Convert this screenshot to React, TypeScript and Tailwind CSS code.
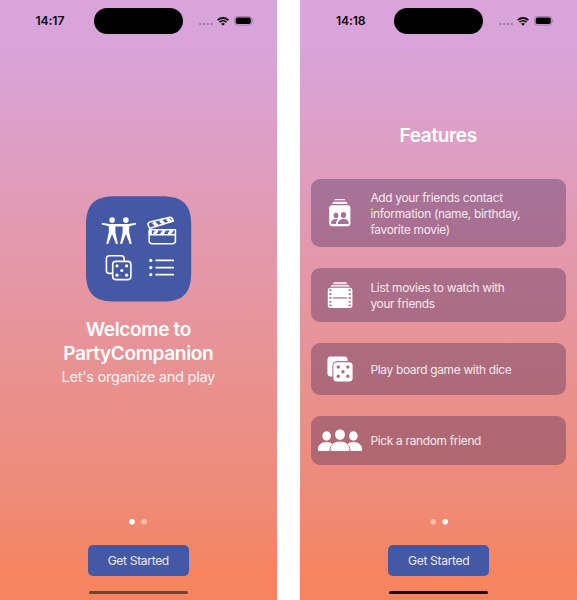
import React from "react";

function Wifi() {
  return (
    <svg width="12" height="9" viewBox="0 0 12 9" fill="none" stroke="#0b070c">
      <path d="M0.6 3.1C3.7 0.3 8.3 0.3 11.4 3.1" strokeWidth="1.8" />
      <path d="M2.5 5.2C4.5 3.4 7.5 3.4 9.5 5.2" strokeWidth="1.7" />
      <path d="M4.1 6.7C5.2 5.8 6.8 5.8 7.9 6.7L6 8.7Z" fill="#0b070c" stroke="none" />
    </svg>
  );
}

function Battery() {
  return (
    <svg width="20" height="10" viewBox="0 0 20 10">
      <rect x="0.6" y="0.5" width="17.3" height="8.6" rx="2.8" fill="none" stroke="#9b759c" strokeWidth="0.8" />
      <rect x="1.7" y="1.6" width="15.1" height="6.4" rx="1.8" fill="#000" />
      <path d="M18.6 3.3C19.7 3.8 19.7 5.8 18.6 6.3Z" fill="#8d6b8e" />
    </svg>
  );
}

function StatusBar({ time }: { time: string }) {
  return (
    <div className="flex h-[42px] shrink-0 items-center">
      <div className="w-[94px] pl-[35.5px] text-[12.2px] leading-4 font-semibold tracking-[-0.1px] text-[#0b070c]">{time}</div>
      <div className="h-[26px] w-[88.5px] rounded-full bg-black" />
      <svg className="mt-[5px] ml-[16px]" width="14" height="4" viewBox="0 0 14 4" fill="#a37ba5">
        {[1.3, 5.1, 8.9, 12.7].map((cx) => (
          <circle key={cx} cx={cx} cy="2" r="1.2" />
        ))}
      </svg>
      <div className="ml-[4.5px]"><Wifi /></div>
      <div className="ml-[5px]"><Battery /></div>
    </div>
  );
}

function Footer({ active, barClass }: { active: number; barClass: string }) {
  return (
    <div className="mt-auto flex shrink-0 flex-col items-center">
      <svg width="20" height="6" viewBox="0 0 20 6">
        {[0, 1].map((i) => (
          <circle key={i} cx={i === 0 ? 4.1 : 16.2} cy="2.8" r="2.8" fill={i === active ? "#ffffff" : "#f8bcae"} />
        ))}
      </svg>
      <button className="mt-[20.4px] h-[31px] w-[101.5px] rounded-[5px] bg-[#4558a6] text-[12.1px] leading-4 tracking-[-0.34px] text-[#eceaf4]">Get Started</button>
      <div className={`mt-[14.7px] mb-[5.6px] h-[3.6px] w-[99px] rounded-full ${barClass}`} />
    </div>
  );
}

function Screen({ time, active, barClass, children }: { time: string; active: number; barClass: string; children: React.ReactNode }) {
  return (
    <section className="flex h-[600px] w-[276.6px] flex-col bg-[linear-gradient(180deg,#d9a4da_0px,#d9a4da_44px,#e6959e_310px,#ef8a75_510px,#f5845f_574px)]">
      <StatusBar time={time} />
      {children}
      <Footer active={active} barClass={barClass} />
    </section>
  );
}

function AppLogo() {
  return (
    <svg width="106" height="106" viewBox="0 0 106 106" className="ml-[0.6px] shrink-0">
      <path d="M30 0.3H76C97.5 0.3 105.6 8.5 105.6 30V76C105.6 97.5 97.5 105.6 76 105.6H30C8.5 105.6 0.3 97.5 0.3 76V30C0.3 8.5 8.5 0.3 30 0.3Z" transform="translate(-0.4 0)" fill="#4558a6" />
      <g fill="#fff">
        <circle cx="26.1" cy="24.1" r="2.8" />
        <circle cx="39.9" cy="24.1" r="2.8" />
        <path d="M15.8 26.7L23.4 27.9H42.6L50.1 26.7V28.5L43.2 30.2V36.6L45.6 47.2Q45.2 48.6 43.7 47.7L39.9 38L36.1 47.7Q34.6 48.6 34.2 47.2L36.6 36.6V30.4H29.4V36.6L31.8 47.2Q31.4 48.6 29.9 47.7L26.1 38L22.3 47.7Q20.8 48.6 20.4 47.2L22.8 36.6V30.2L15.8 28.5Z" />
      </g>
      <g stroke="#fff" fill="none" strokeWidth="1.6" strokeLinecap="round" strokeLinejoin="round">
        <path d="M63.2 34.3V44.7Q63.2 47.7 66.2 47.7H86.4Q89.4 47.7 89.4 44.7V33.8H64.2L62.2 29Q61.7 26.8 63.9 26L83.8 21.4Q86.3 21.2 87.3 25L64.2 32.2" />
        <path d="M63.4 38.8H89.2" />
        <path d="M67.3 26.3L71.2 30M74.3 24.6L78.2 27.9M81.2 22.8L84.9 26" strokeWidth="3.3" strokeLinecap="butt" />
        <path d="M64.4 34.2L64.2 38.3M71.3 34.2L68.2 38.5M78.6 34.2L75.5 38.5M86 34.2L82.9 38.5" strokeWidth="3.1" strokeLinecap="butt" />
        <path d="M26.3 77.4H23.8Q20.8 77.4 20.8 74.4V62.7Q20.8 59.7 23.8 59.7H35.6Q38.6 59.7 38.6 62.7V64.2" transform="translate(-0.4 0)" />
        <rect x="26.7" y="65.4" width="18.2" height="18.2" rx="3" />
        <path d="M70.2 64.4H87.3M70.2 71.6H87.3M70.2 78.7H87.3" strokeWidth="1.7" />
      </g>
      <g fill="#fff">
        <circle cx="31" cy="69.8" r="1.6" /><circle cx="40.6" cy="69.8" r="1.6" />
        <circle cx="35.8" cy="74.5" r="1.6" />
        <circle cx="31" cy="79.2" r="1.6" /><circle cx="40.6" cy="79.2" r="1.6" />
        <circle cx="64.8" cy="64.4" r="1.6" /><circle cx="64.8" cy="71.6" r="1.6" /><circle cx="64.8" cy="78.7" r="1.6" />
      </g>
    </svg>
  );
}

function ContactsIcon() {
  return (
    <svg width="24" height="30" viewBox="0 0 24 30" fill="#fff">
      <path d="M6.4 2.3Q6.4 0.9 7.8 0.9H15.8Q17.2 0.9 17.2 2.3Z" opacity="0.9" />
      <path d="M4.3 5.4Q4.3 3.7 5.8 3.7H17.9Q19.4 3.7 19.4 5.4V6H4.3Z" opacity="0.9" />
      <rect x="1.2" y="7.3" width="21.2" height="21" rx="3" />
      <g fill="#a87294">
        <ellipse cx="8" cy="17.4" rx="2.4" ry="2.7" />
        <ellipse cx="15.5" cy="16.9" rx="2.7" ry="3" />
        <path d="M3 24.8C3.2 22.5 5.3 21 7.8 21C8.6 21 9.3 21.1 9.9 21.4C8.4 22.5 8 24 8 26H4.2Q3 26 3 24.8Z" />
        <path d="M9.7 26C9.6 23 12.3 21 15.4 21C18.3 21 20.7 22.5 20.8 24.8Q20.8 26 19.7 26Z" />
      </g>
    </svg>
  );
}

function FilmIcon() {
  return (
    <svg width="26" height="28" viewBox="0 0 26 28" fill="#fff">
      <path d="M6 2.9Q6.2 0.9 7.8 0.9H18.4Q20 0.9 20.2 2.9Z" opacity="0.78" />
      <path d="M3.6 5.7Q3.8 3.7 5.4 3.7H20.8Q22.4 3.7 22.6 5.7Z" opacity="0.8" />
      <rect x="0.8" y="6.8" width="24.6" height="20.1" rx="2.5" />
      <g fill="#ac7089">
        {[8.8, 12.8, 16.6, 20.4, 24].map((y) => (
          <g key={y}>
            <rect x="2.3" y={y - 0.5} width="2.3" height="1.7" rx="0.6" />
            <rect x="21.6" y={y - 0.5} width="2.3" height="1.7" rx="0.6" />
          </g>
        ))}
        <rect x="6" y="16.3" width="14.2" height="1.2" />
      </g>
    </svg>
  );
}

function DiceIcon() {
  return (
    <svg width="26" height="27" viewBox="0 0 26 27" fill="#fff">
      <rect x="0.4" y="0.5" width="20.2" height="19.9" rx="3.4" />
      <rect x="5.9" y="5.6" width="19.8" height="20" rx="4" fill="#ae6e80" stroke="#ae6e80" strokeWidth="1" />
      <rect x="6.4" y="6.2" width="19.2" height="19.2" rx="3.5" />
      <g fill="#ae6e80">
        <circle cx="11.3" cy="11" r="1.7" /><circle cx="20.8" cy="11" r="1.7" />
        <circle cx="16" cy="15.7" r="1.7" />
        <circle cx="11.3" cy="20.3" r="1.7" /><circle cx="20.8" cy="20.3" r="1.7" />
      </g>
    </svg>
  );
}

function PeopleIcon() {
  return (
    <svg width="46" height="24" viewBox="0 0 46 24" fill="#fff">
      <ellipse cx="9.6" cy="7" rx="4.3" ry="4.7" />
      <ellipse cx="36.4" cy="7" rx="4.3" ry="4.7" />
      <path d="M0.8 20.6C0.8 16.2 4.4 13 9.4 13C12 13 14 13.7 15.4 14.9C13.2 16.7 12.5 18.8 12.5 22H2.2Q0.8 22 0.8 20.6Z" />
      <path d="M45.2 20.6C45.2 16.2 41.6 13 36.6 13C34 13 32 13.7 30.6 14.9C32.8 16.7 33.5 18.8 33.5 22H43.8Q45.2 22 45.2 20.6Z" />
      <ellipse cx="23" cy="5.6" rx="4.9" ry="5.3" />
      <path d="M13.5 20.3C13.6 16.1 17.2 12.6 23 12.6C28.8 12.6 32.4 16.1 32.5 20.3Q32.5 22 31 22H15Q13.5 22 13.5 20.3Z" />
    </svg>
  );
}

function Feature({ icon, lines, className }: { icon: React.ReactNode; lines: string[]; className: string }) {
  return (
    <div className={`flex shrink-0 items-center rounded-[9px] bg-[#25104c]/30 ${className}`}>
      <div className="mr-[2px] flex w-[57px] shrink-0 justify-center">{icon}</div>
      <p className="pt-[0.8px] text-[11.9px] leading-[15.7px] tracking-[-0.3px] whitespace-nowrap text-[#f7e9f0]">
        {lines.map((line) => (
          <span key={line} className="block">{line}</span>
        ))}
      </p>
    </div>
  );
}

export default function App() {
  return (
    <main className="flex h-[600px] w-[577px] justify-between overflow-hidden bg-white font-['Inter','Liberation_Sans',sans-serif]">
      <Screen time="14:17" active={0} barClass="bg-[#754332]">
        <div className="flex flex-col items-center pt-[154px] text-white">
          <AppLogo />
          <h1 className="mt-[15px] text-center text-[19.1px] leading-[24px] font-semibold tracking-[-0.38px]">Welcome to<br />PartyCompanion</h1>
          <p className="mt-[1.5px] text-[14.7px] leading-[21px] tracking-[-0.33px] text-[#fff2f2]">Let's organize and play</p>
        </div>
      </Screen>
      <Screen time="14:18" active={1} barClass="bg-[#17100f]">
        <h2 className="mt-[81px] mr-[1px] text-center text-[19.1px] leading-6 font-semibold tracking-[-0.38px] text-white">Features</h2>
        <div className="mt-[32.3px] flex flex-col gap-[21px] pr-[11.5px] pl-[11px]">
          <Feature className="h-[68px]" icon={<ContactsIcon />} lines={["Add your friends contact", "information (name, birthday,", "favorite movie)"]} />
          <Feature className="h-[54px]" icon={<FilmIcon />} lines={["List movies to watch with", "your friends"]} />
          <Feature className="h-[52px]" icon={<DiceIcon />} lines={["Play board game with dice"]} />
          <Feature className="h-[48.5px]" icon={<PeopleIcon />} lines={["Pick a random friend"]} />
        </div>
      </Screen>
    </main>
  );
}
